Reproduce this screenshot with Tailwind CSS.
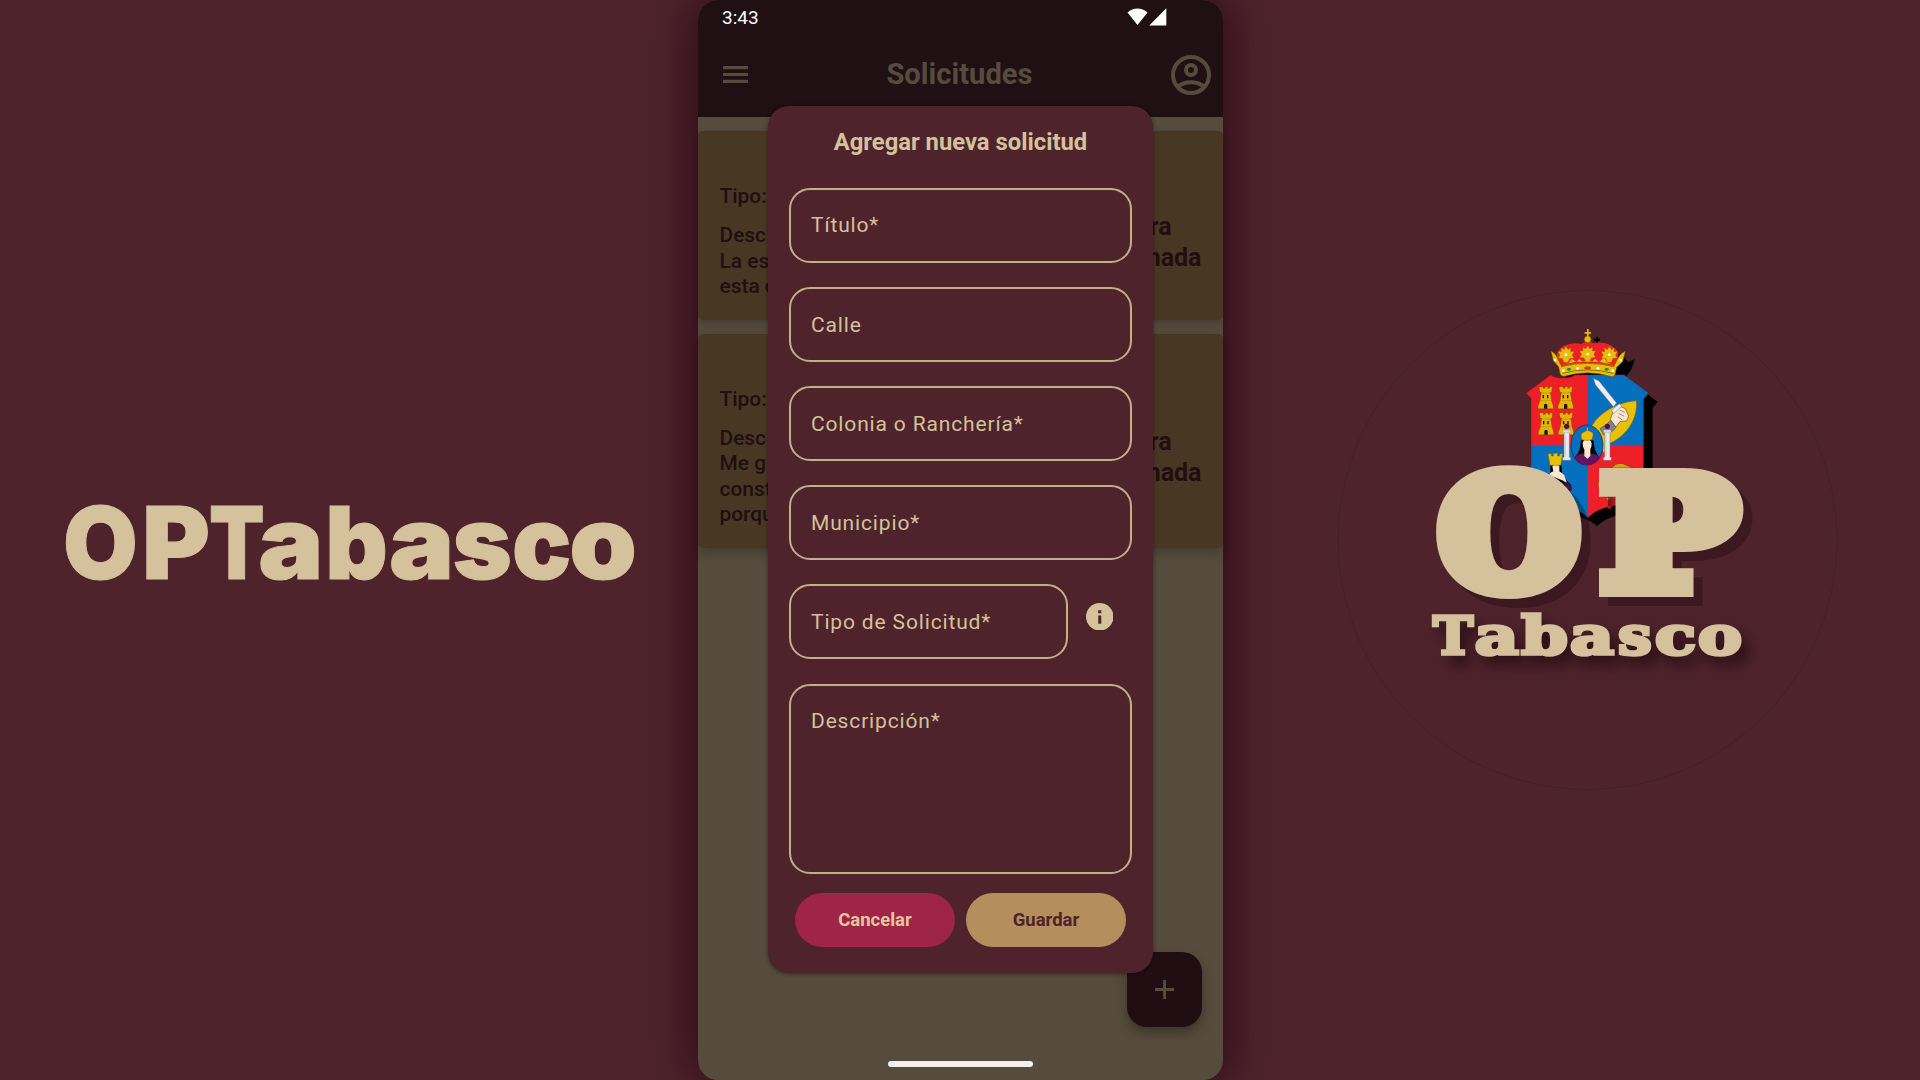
<!DOCTYPE html>
<html lang="es">
<head>
<meta charset="utf-8">
<title>OPTabasco</title>
<script src="https://cdn.jsdelivr.net/npm/@tailwindcss/browser@4"></script>
</head>
<body class="flex h-[1080px] w-[1920px] overflow-hidden bg-[#4e232c] font-['Roboto',sans-serif]">

<!-- Brand name -->
<section class="w-[698px] shrink-0">
  <svg class="block h-[1080px] w-[698px]" viewBox="0 0 698 1080" fill="#d5c19b" stroke="#d5c19b" stroke-width="1" font-family="Inter, sans-serif" font-weight="900" font-size="101">
    <text y="578.500"><tspan x="62.900" textLength="74.800" lengthAdjust="spacingAndGlyphs">O</tspan><tspan x="141.900" textLength="68" lengthAdjust="spacingAndGlyphs">P</tspan><tspan x="208.900" textLength="55.500" lengthAdjust="spacingAndGlyphs">T</tspan><tspan x="258.300" textLength="65.200" lengthAdjust="spacingAndGlyphs">a</tspan><tspan x="325.200" textLength="62.500" lengthAdjust="spacingAndGlyphs">b</tspan><tspan x="389" textLength="65.200" lengthAdjust="spacingAndGlyphs">a</tspan><tspan x="452.500" textLength="59.400" lengthAdjust="spacingAndGlyphs">s</tspan><tspan x="512" textLength="59.300" lengthAdjust="spacingAndGlyphs">c</tspan><tspan x="569.200" textLength="67.600" lengthAdjust="spacingAndGlyphs">o</tspan></text>
  </svg>
</section>

<!-- Phone -->
<main class="relative z-10 flex h-[1080px] w-[525px] shrink-0 flex-col rounded-[20px] bg-[#564c3d] shadow-[0_0_45px_4px_rgba(32,0,12,0.75)]">
  <header class="h-[117px] shrink-0 rounded-t-[20px] bg-[#200f13]">
    <div class="flex h-[33px] items-center justify-between pl-6 pr-[56px]">
      <span class="pt-0.5 text-[19px] leading-none text-white">3:43</span>
      <svg class="h-[18px] w-10" viewBox="0 0 40 18" fill="#fff">
        <path d="M.5 4.600C6-1 15-1 20.500 4.600L10.500 17Z"/>
        <path d="M39.300 .300V17.400H22.300Z"/>
      </svg>
    </div>
    <div class="flex h-[84px] items-start justify-between pl-[25px] pr-3">
      <svg class="mt-[33px] h-[17px] w-[25px]" viewBox="0 0 25 17" fill="#564c3d"><path d="M0 0h25v3.200H0zM0 6.900h25v3.200H0zM0 13.800h25v3.200H0z"/></svg>
      <h1 class="mt-[24px] text-[29.200px] font-bold leading-[34px] text-[#564c3d]">Solicitudes</h1>
      <svg class="mt-[22px] size-10" viewBox="0 0 40 40" fill="none" stroke="#564c3d" stroke-width="4">
        <circle cx="20" cy="20" r="18"/>
        <circle cx="20" cy="15" r="5"/>
        <path d="M6.500 32C14 25.500 26 25.500 33.500 32"/>
      </svg>
    </div>
  </header>

  <div class="flex flex-col gap-[13.500px] pt-3.5 text-[#210e12]">
    <article class="flex h-[189px] justify-between rounded-[5px] bg-[#483823] px-[21.500px] shadow-[0_3px_8px_rgba(0,0,0,0.22)]">
      <div class="pt-[53px] text-[20.900px] font-medium leading-[25.400px]">
        <p>Tipo:</p>
        <p class="mt-[14px]">Desc<br>La es<br>esta d</p>
      </div>
      <p class="pt-[80px] text-center text-[25px] font-bold leading-[31px]"><span class="pl-[7px]">Obra</span><br>Terminada</p>
    </article>
    <article class="flex h-[214px] justify-between rounded-[5px] bg-[#483823] px-[21.500px] shadow-[0_4px_12px_rgba(0,0,0,0.25)]">
      <div class="pt-[53px] text-[20.900px] font-medium leading-[25.400px]">
        <p>Tipo:</p>
        <p class="mt-[14px]">Desc<br>Me g<br>const<br>porqu</p>
      </div>
      <p class="pt-[92px] text-center text-[25px] font-bold leading-[31px]"><span class="pl-[7px]">Obra</span><br>Terminada</p>
    </article>
  </div>

  <!-- Floating add button -->
  <button class="absolute left-[429px] top-[952px] flex size-[74.500px] items-center justify-center rounded-[20px] bg-[#210e12] shadow-[0_6px_12px_rgba(0,0,0,0.3)]">
    <svg class="size-[19px]" viewBox="0 0 19 19" fill="#564c3d"><path d="M8.100 0h2.900v8.100H19v2.900h-8V19H8.100v-8H0V8.100h8.100z"/></svg>
  </button>

  <!-- Dialog -->
  <form class="absolute left-[70px] top-[106px] flex h-[867px] w-[385px] flex-col rounded-[21px] bg-[#4e232c] px-[21px] pt-[19px] text-[#d5c19b] shadow-[0_1px_4px_rgba(0,0,0,0.45)]">
    <h2 class="relative top-px text-center text-[23.800px] font-bold leading-8">Agregar nueva solicitud</h2>
    <div class="mt-[30.600px] flex flex-col gap-[24.200px] text-[21px] tracking-[0.850px]">
      <div class="flex h-[75px] items-center rounded-[21px] border-2 border-[#c4ae8a] px-[20px] pt-0.5">Título*</div>
      <div class="flex h-[75px] items-center rounded-[21px] border-2 border-[#c4ae8a] px-[20px] pt-0.5">Calle</div>
      <div class="flex h-[75px] items-center rounded-[21px] border-2 border-[#c4ae8a] px-[20px] pt-0.5">Colonia o Ranchería*</div>
      <div class="flex h-[75px] items-center rounded-[21px] border-2 border-[#c4ae8a] px-[20px] pt-0.5">Municipio*</div>
      <div class="flex gap-[17.500px]">
        <div class="flex h-[75px] w-[279px] items-center rounded-[21px] border-2 border-[#c4ae8a] px-[20px] pt-0.5">Tipo de Solicitud*</div>
        <svg class="mt-[18.500px] size-[27.500px]" viewBox="0 0 27 27"><circle cx="13.500" cy="13.500" r="13.500" fill="#d5c19b"/><path d="M12 7h3v3h-3zM12 12.200h3v8.100h-3z" fill="#4e232c"/></svg>
      </div>
      <div class="h-[190px] rounded-[21px] border-2 border-[#c4ae8a] px-[20px] pt-[22px] leading-[26px]">Descripción*</div>
    </div>
    <div class="mt-[19.500px] flex gap-[11px] px-1.5 text-[18.500px] font-bold">
      <button class="h-[54px] w-[160px] rounded-full bg-[#9e2448] pt-0.5 text-[#e6c3a2]">Cancelar</button>
      <button class="h-[54px] w-[160px] rounded-full bg-[#b48f5d] pt-0.5 text-[#4e232c]">Guardar</button>
    </div>
  </form>

  <div class="mx-auto mb-[13px] mt-auto h-1.5 w-[145px] rounded-full bg-[#f3efee]"></div>
</main>

<!-- Emblem -->
<section class="w-[697px] shrink-0">
  <svg class="block h-[1080px] w-[697px]" viewBox="1223 0 697 1080">
    <defs>
      <filter id="soft" x="-20%" y="-50%" width="140%" height="220%" color-interpolation-filters="sRGB"><feDropShadow dx="7" dy="9" stdDeviation="7" flood-color="#1c060c" flood-opacity=".7"/></filter>
      <path id="shield" d="M152 195C170 208 210 206 225 194H330L372 194L446 249L431 268V474V590C395 590 345 575 293 602Q277 610 263 623Q248 606 226 600C180 580 140 590 93 590V265L78 249Z"/>
      <path id="crown" d="M180 195L174 180L165 160L150 128L170 132C178 100 220 95 244 102Q262 88 280 100C310 92 345 105 356 130L378 122L366 155L352 172L344 200Q262 180 180 195Z"/>
      <g id="tower"><path d="M8 0h8v5h6V0h8v5h6V0h8l-2 17h-4l4 26 5 15v8H1v-8l6-15 4-26H7L4 2z" fill="#e3b505" stroke="#6b4a00" stroke-width="1"/><path d="M15 25h4v10h-4zM28 25h4v10h-4zM19 54q5-5 10 0v12H19z" fill="#1a1200"/><path d="M11 19h27M8 42h33" stroke="#9a7400" stroke-width="1"/></g>
      <g id="column"><path d="M2 8h16v80h4v9H-2v-9h4z" fill="#e9e9ee" stroke="#777a88" stroke-width="1.500"/><path d="M-1 6h22v8H-1zM6 20v66" fill="#d9dae2" stroke="#999" stroke-width="1"/><circle cx="10" cy="-5" r="8" fill="#4b1247"/></g>
      <g id="leaf"><path d="M0-25l6 10 8-5 0 11 10 0-6 10 5 9-12 1-5 12H-6l-5-12-12-1 5-9-6-10 10 0 0-11 8 5z" fill="#e6bd08" stroke="#a37c00" stroke-width="1"/><circle r="4" fill="#fff"/></g>
    </defs>

    <circle cx="1587.500" cy="540" r="249.500" fill="none" stroke="#452029" stroke-width="1"/>

    <!-- Coat of arms -->
    <g transform="translate(1500 310) scale(.33333)">
      <g transform="translate(27 26)" fill="#000"><use href="#shield"/><use href="#crown"/><path d="M254 60h19v6h-19zM261 54h6v20h-6z"/></g>
      <clipPath id="shieldClip"><use href="#shield"/></clipPath>
      <g clip-path="url(#shieldClip)">
        <path d="M60 180h203v226H60zM263 406h200v230H263z" fill="#ee1f26"/>
        <path d="M263 180h200v226H263zM60 406h203v230H60z" fill="#0470bd"/>
        <path d="M263 180V640M60 406H460" stroke="#8a4a86" stroke-width="2.500"/>
      </g>
      <use href="#shield" fill="none" stroke="#5c1a2a" stroke-width="1.500"/>
      <use href="#tower" x="113" y="230"/><use href="#tower" x="173" y="230"/>
      <use href="#tower" x="114" y="308"/><use href="#tower" x="174" y="308"/>

      <!-- Arm with sword -->
      <path d="M409 272C345 276 282 318 270 362L312 430L330 400C385 375 415 320 409 272Z" fill="#e8c006" stroke="#7c6410" stroke-width="2"/>
      <path d="M334 330L348 352Q338 368 312 376L300 356Q318 346 334 330Z" fill="#7d8292" stroke="#444" stroke-width="1.500"/>
      <path d="M331 328L341 302L360 289L376 296L386 318L380 333L360 334L348 351Z" fill="#fbe6cf" stroke="#3a2a20" stroke-width="1.500"/>
      <path d="M359 300l15 7M356 310l17 9M353 320l14 10" stroke="#3a2a20" stroke-width="1.500"/>
      <path d="M280 205L297 213L350 279L340 290L286 224Z" fill="#eceef3" stroke="#666b7a" stroke-width="1.500"/>
      <path d="M334 301L358 281L365 289L341 311Z" fill="#eceef3" stroke="#666b7a" stroke-width="1.500"/>

      <!-- Central medallion -->
      <use href="#column" x="190" y="354"/><use href="#column" x="312" y="354"/>
      <ellipse cx="261" cy="405" rx="48" ry="60" fill="#0470bd" stroke="#20264a" stroke-width="2"/>
      <path d="M242 393Q261 375 281 393Q282 425 300 444L225 440Q242 425 242 393Z" fill="#000"/>
      <path d="M222 443Q240 428 253 431L261 447L271 431Q290 430 301 443Q286 466 261 466Q234 465 222 443Z" fill="#64145f"/>
      <path d="M248 400Q250 388 261 388Q274 388 275 402Q274 414 271 418V438L262 446L253 438V418Q248 412 248 400Z" fill="#fbe6cf"/>
      <path d="M246 389Q238 370 252 366L260 362V353h4v9Q282 366 279 376L276 389Q261 394 246 389Z" fill="#e8c006" stroke="#806208" stroke-width="1.500"/>

      <!-- Lower left figure -->
      <path d="M151 465Q168 450 184 464L187 495L215 528L200 540L150 500Z" fill="#000"/>
      <path d="M157 468Q167 460 178 468V484L192 494L202 522L190 512L160 500H148L150 489L160 484Z" fill="#fbe6cf"/>
      <path d="M195 515l10 4 12 14-3 9-10 2-8-14z" fill="#43124a"/>
      <path d="M144 431h10v7h6v-8h13v8h6v-7h9l-6 35h-32z" fill="#e8c006" stroke="#806208" stroke-width="1.500"/>

      <!-- Lower right lion -->
      <path d="M338 470Q356 452 380 466L400 474H335ZM296 482l12-8 4 12-8 8zM294 520l10-6 3 24-12-6zM315 562l18 4-6 10z" fill="#d3a40c" stroke="#7c3a00" stroke-width="2"/>
      <path d="M324 568h10v28h-10z" fill="#b4161d"/>

      <!-- Crown -->
      <path d="M170 132C180 103 220 95 244 102Q262 88 280 100C310 92 345 105 356 130L350 172H176Z" fill="#ee1f26"/>
      <path d="M153 123Q168 130 174 148L184 168Q262 148 342 168L352 148Q360 130 376 124L368 155L350 172L346 190Q343 203 332 199Q262 178 192 199Q182 199 180 190L176 170L160 152Z" fill="#e6bd08" stroke="#7a5600" stroke-width="1.500"/>
      <path d="M187 164Q262 144 338 164L322 158L312 142L302 152L296 156L285 146L276 156H248L238 146L229 157L216 146L205 160Z" fill="#e6bd08"/>
      <path d="M183 170Q262 150 343 170M187 190Q262 170 340 190" fill="none" stroke="#8a6200" stroke-width="2.500"/>
      <use href="#leaf" x="198" y="134"/><use href="#leaf" x="263" y="132"/><use href="#leaf" x="328" y="134"/>
      <ellipse cx="263" cy="174" rx="10" ry="5" fill="#dd3a10"/>
      <ellipse cx="207" cy="178" rx="6" ry="4" fill="#168a35"/><ellipse cx="320" cy="178" rx="6" ry="4" fill="#168a35"/>
      <g fill="#fff"><circle cx="190" cy="182" r="4"/><circle cx="233" cy="175" r="4"/><circle cx="294" cy="175" r="4"/><circle cx="338" cy="182" r="4"/><circle cx="165" cy="150" r="4"/><circle cx="362" cy="150" r="4"/></g>
      <circle cx="263" cy="88" r="10" fill="#e6bd08" stroke="#7a5600" stroke-width="1.500"/>
      <path d="M261 57h5v9h7v5h-7v9h-5v-9h-7v-5h7z" fill="#e6bd08"/>
    </g>

    <!-- Wordmark -->
    <g font-family="'DejaVu Serif', serif" font-weight="700">
      <g font-size="150" stroke-linejoin="miter">
        <g fill="#1c060c" stroke="#1c060c" stroke-width="20" opacity=".34" aria-hidden="true">
          <text y="596"><tspan x="1449" textLength="138" lengthAdjust="spacingAndGlyphs">O</tspan><tspan x="1611.500" textLength="133.500" lengthAdjust="spacingAndGlyphs">P</tspan></text>
        </g>
        <text y="587" fill="#d5c19b" stroke="#d5c19b" stroke-width="20"><tspan x="1440" textLength="138" lengthAdjust="spacingAndGlyphs">O</tspan><tspan x="1602.500" textLength="133.500" lengthAdjust="spacingAndGlyphs">P</tspan></text>
      </g>
      <text y="654" font-size="52.500" fill="#d5c19b" stroke="#d5c19b" stroke-width="3.500" filter="url(#soft)"><tspan x="1433" textLength="40.100" lengthAdjust="spacingAndGlyphs">T</tspan><tspan x="1474.800" textLength="44" lengthAdjust="spacingAndGlyphs">a</tspan><tspan x="1521.200" textLength="46.700" lengthAdjust="spacingAndGlyphs">b</tspan><tspan x="1570" textLength="44" lengthAdjust="spacingAndGlyphs">a</tspan><tspan x="1618" textLength="33.700" lengthAdjust="spacingAndGlyphs">s</tspan><tspan x="1655" textLength="41" lengthAdjust="spacingAndGlyphs">c</tspan><tspan x="1698" textLength="44" lengthAdjust="spacingAndGlyphs">o</tspan></text>
    </g>
  </svg>
</section>
</body>
</html>
